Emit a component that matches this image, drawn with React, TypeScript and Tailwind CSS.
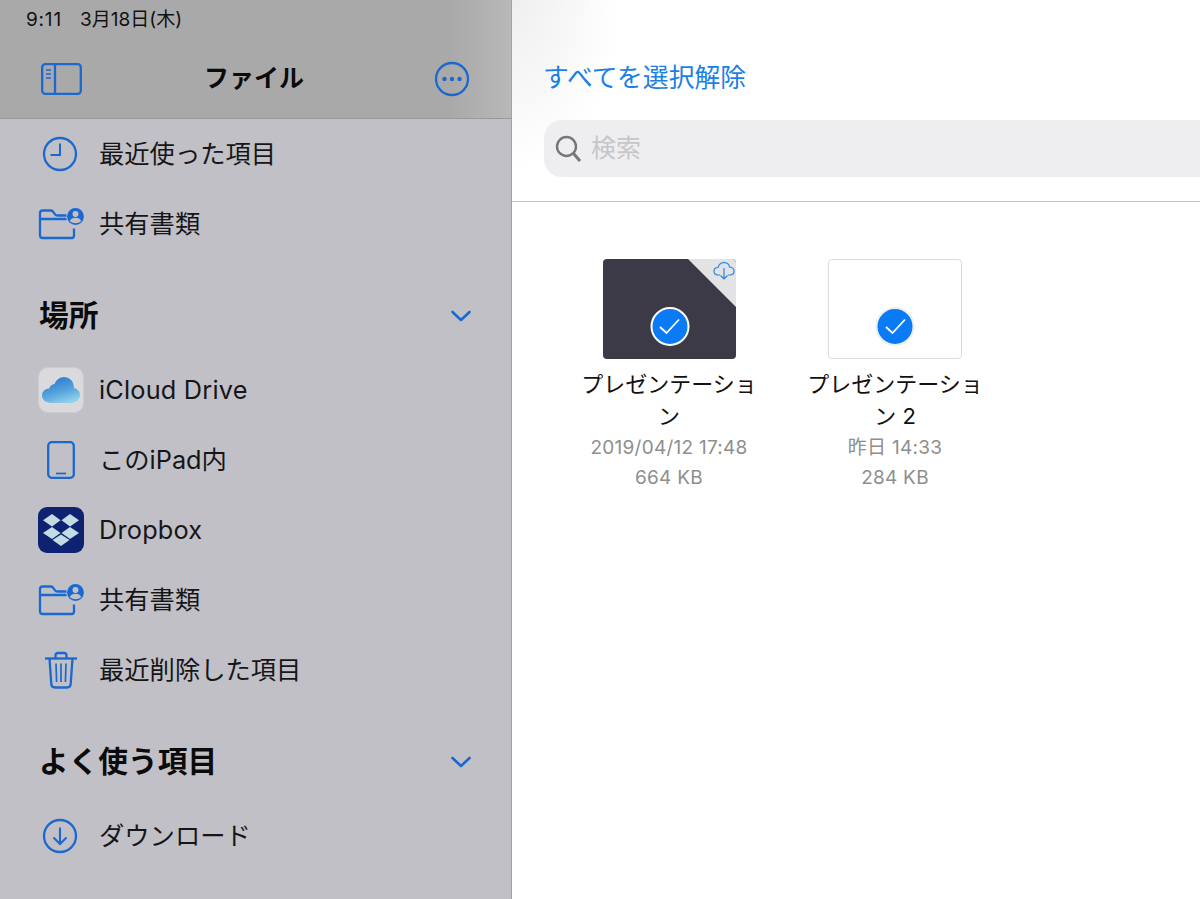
import React from "react";

const blue = "#1b68cf";

function Clock() {
  return (
    <svg className="mr-[2px]" width="36" height="36" viewBox="0 0 36 36" fill="none" stroke={blue} strokeWidth="2.3">
      <circle cx="18" cy="18" r="16" />
      <path d="M18 7.5V19H8.5" strokeWidth="2" />
    </svg>
  );
}

function SharedFolder() {
  return (
    <svg width="46" height="32" viewBox="0 0 46 32" fill="none">
      <path
        d="M36 20.5V27.5Q36 30 33.5 30H4.5Q2 30 2 27.5V5Q2 2.5 4.5 2.5H12.5Q14 2.5 15 3.6L17 6.4Q17.8 7.5 19.5 7.5H28.5M2 11H28.5"
        stroke={blue}
        strokeWidth="2.3"
      />
      <circle cx="37.5" cy="8.5" r="8.4" fill={blue} />
      <circle cx="37.5" cy="6" r="3" fill="#c1c0c6" />
      <path d="M31.8 13.2Q33 9.8 37.5 9.8T43.2 13.2Q41 15.3 37.5 15.3T31.8 13.2Z" fill="#c1c0c6" />
    </svg>
  );
}

function Tablet() {
  return (
    <svg className="mr-[1px]" width="28" height="38" viewBox="0 0 28 38" fill="none" stroke={blue}>
      <rect x="1.2" y="1.2" width="25.6" height="35.6" rx="3.5" strokeWidth="2.3" />
      <path d="M9 32.5H19" strokeWidth="1.8" />
    </svg>
  );
}

function Trash() {
  return (
    <svg className="mr-[1px]" width="34" height="38" viewBox="0 0 34 38" fill="none" stroke={blue} strokeWidth="2.3">
      <path d="M1 7.5H33" />
      <path d="M11.5 7.5V4.5Q11.5 2 14 2H20Q22.5 2 22.5 4.5V7.5" />
      <path d="M5.5 7.5L7.3 33Q7.5 36.5 11 36.5H23Q26.5 36.5 26.7 33L28.5 7.5" />
      <path d="M12 12.5L12.6 31M17 12.5V31M22 12.5L21.4 31" strokeWidth="1.7" />
    </svg>
  );
}

function DownloadCircle() {
  return (
    <svg className="mr-[2px]" width="36" height="36" viewBox="0 0 36 36" fill="none" stroke={blue} strokeWidth="2.3">
      <circle cx="18" cy="18" r="16" />
      <path d="M18 9.5V26M11.5 19.5L18 26L24.5 19.5" strokeWidth="2.1" />
    </svg>
  );
}

function ICloud() {
  return (
    <div className="w-[46px] h-[46px] rounded-[10px] bg-[#dadadc] flex items-center justify-center border border-[#cdcdd0]">
      <svg width="38" height="26" viewBox="0 0 38 26">
        <defs>
          <linearGradient id="ic" gradientUnits="userSpaceOnUse" x1="14" y1="0" x2="22" y2="26">
            <stop offset="0" stopColor="#2a7bcf" />
            <stop offset="0.6" stopColor="#5aa6de" />
            <stop offset="1" stopColor="#8ed0ea" />
          </linearGradient>
        </defs>
        <g fill="url(#ic)">
          <circle cx="7" cy="18.5" r="7" />
          <circle cx="13" cy="13" r="6" />
          <circle cx="22" cy="10" r="10" />
          <circle cx="31" cy="18" r="7" />
          <rect x="7" y="15" width="24" height="11" />
        </g>
      </svg>
    </div>
  );
}

function DropboxIcon() {
  return (
    <div className="w-[46px] h-[46px] rounded-[9px] bg-[#0e2272] flex items-center justify-center">
      <svg width="36" height="32" viewBox="0 0 36 32" fill="#c3dbe2">
        <path d="M9 0L17.5 6.3L9 12.6L0 6.3Z" />
        <path d="M27 0L36 6.3L27 12.6L18.5 6.3Z" />
        <path d="M9 13L17.5 19L9 25L0 19Z" />
        <path d="M27 13L36 19L27 25L18.5 19Z" />
        <path d="M18 20.5L26.5 26L18 32L9.5 26Z" />
      </svg>
    </div>
  );
}

function Chevron() {
  return (
    <svg width="22" height="14" viewBox="0 0 22 14" fill="none" stroke={blue} strokeWidth="2.6" strokeLinecap="round" strokeLinejoin="round">
      <path d="M2.5 3L11 11L19.5 3" />
    </svg>
  );
}

function Row({ icon, label, latin }: { icon: React.ReactNode; label: string; latin?: boolean }) {
  return (
    <div className="h-[70px] flex items-center">
      <div className="w-[46px] ml-[38px] mr-[15px] flex justify-center shrink-0">{icon}</div>
      <span className={`pb-[1px] text-[25.3px] leading-[36px] text-[#161618] ${latin ? "tracking-[0.2px]" : ""}`}>{label}</span>
    </div>
  );
}

function Section({ title }: { title: string }) {
  return (
    <div className="h-[96px] pt-[18px] pl-[39px] pr-[39px] flex items-center justify-between">
      <span className="pb-[3px] text-[29.7px] leading-[40px] font-bold text-[#0b0b0c]">{title}</span>
      <Chevron />
    </div>
  );
}

function FileItem({ dark, name, date, size }: { dark?: boolean; name: string; date: string; size: string }) {
  return (
    <div className="w-[190px] flex flex-col items-center">
      <div
        className={`relative h-[100px] rounded-[4px] overflow-hidden ${
          dark ? "w-[133px] ml-[1px] bg-[#3b3a46]" : "w-[134px] bg-white border border-[#dcdcdc]"
        }`}
      >
        {dark && (
          <>
            <div className="absolute right-0 top-0 w-[48px] h-[48px] bg-[#e3e3e3] [clip-path:polygon(0_0,100%_0,100%_100%)]" />
            <svg className="absolute right-[1px] top-[2px]" width="22" height="20" viewBox="0 0 22 20" fill="none" stroke="#2a84e8" strokeWidth="1.2">
              <path d="M7 14H5Q1 14 1 10Q1 6.5 5 6.5Q6.5 1.5 11.5 1.5Q16 2 16.5 6Q21 6.5 21 10Q21 14 17 14H15" />
              <path d="M11 7V18M7.5 14.5L11 18L14.5 14.5" />
            </svg>
          </>
        )}
        <div
          className={`absolute left-1/2 -translate-x-1/2 w-[39px] h-[39px] rounded-full bg-[#0a7bf5] flex items-center justify-center border-2 ${
            dark ? "top-[48px] border-white" : "top-[47px] border-[#eeeeee]"
          }`}
        >
          <svg width="22" height="17" viewBox="0 0 22 17" fill="none" stroke="white" strokeWidth="1.8">
            <path d="M1.5 9L8 15L20.5 1.5" />
          </svg>
        </div>
      </div>
      <div className="mt-[9px] text-[22px] leading-[32px] text-[#111] text-center w-[190px]">{name}</div>
      <div className="text-[19px] leading-[31px] tracking-[0.25px] text-[#8e8e8e] text-center whitespace-nowrap">{date}</div>
      <div className="text-[19px] leading-[30px] tracking-[0.25px] text-[#8e8e8e] text-center">{size}</div>
    </div>
  );
}

export default function App() {
  return (
    <div
      className="w-[1200px] h-[899px] flex overflow-hidden bg-white"
      style={{ fontFamily: '"Inter", "Noto Sans CJK JP", sans-serif' }}
    >
      <aside className="w-[512px] shrink-0 h-full bg-[#c1c0c6] border-r border-[#a3a3a6] flex flex-col">
        <header className="h-[119px] shrink-0 border-b border-[#98989a] bg-[linear-gradient(90deg,#a9a9aa_0%,#a9a9aa_88%,#b8b8b9_100%)] flex flex-col">
          <div className="h-[40px] pl-[26px] pt-[9px] flex text-[19px] leading-[22px] text-[#111]">
            <span className="w-[54px] tracking-[0.8px]">9:11</span>
            <span>3月18日(木)</span>
          </div>
          <div className="h-[78px] relative flex items-center justify-between pl-[41px] pr-[41px]">
            <svg width="41" height="32" viewBox="0 0 41 32" fill="none" stroke={blue} strokeWidth="2.3">
              <rect x="1.2" y="1.2" width="38.6" height="29.6" rx="3" />
              <path d="M14 1V31" />
              <path d="M5 7H10M5 11H10M5 15H10" strokeWidth="1.5" />
            </svg>
            <span className="absolute left-[204px] top-[19px] text-[25px] leading-[38px] font-bold text-[#0b0b0c]">ファイル</span>
            <svg width="36" height="36" viewBox="0 0 36 36" fill="none" stroke={blue} strokeWidth="2.3">
              <circle cx="18" cy="18" r="16" />
              <circle cx="10.5" cy="18" r="2.2" fill={blue} stroke="none" />
              <circle cx="18" cy="18" r="2.2" fill={blue} stroke="none" />
              <circle cx="25.5" cy="18" r="2.2" fill={blue} stroke="none" />
            </svg>
          </div>
        </header>
        <Row icon={<Clock />} label="最近使った項目" />
        <Row icon={<SharedFolder />} label="共有書類" />
        <Section title="場所" />
        <Row icon={<ICloud />} label="iCloud Drive" latin />
        <Row icon={<Tablet />} label="このiPad内" />
        <Row icon={<DropboxIcon />} label="Dropbox" latin />
        <Row icon={<SharedFolder />} label="共有書類" />
        <Row icon={<Trash />} label="最近削除した項目" />
        <Section title="よく使う項目" />
        <Row icon={<DownloadCircle />} label="ダウンロード" />
      </aside>
      <main className="flex-1 min-w-0 flex flex-col">
        <div className="h-[202px] shrink-0 border-b border-[#c4c4c6] bg-[radial-gradient(ellipse_110px_170px_at_0_0,#efeff0,#ffffff)] pl-[32px]">
          <div className="h-[120px] pt-[59px] text-[25.8px] leading-[38px] text-[#1b7fe3] -ml-[1px]">すべてを選択解除</div>
          <div className="h-[57px] rounded-l-[18px] bg-[#eeeef0] flex items-center pl-[11px]">
            <svg width="26" height="28" viewBox="0 0 26 28" fill="none" stroke="#77777b" strokeWidth="2.4">
              <circle cx="11.5" cy="11.5" r="9.5" />
              <path d="M18.5 18.5L25 26" strokeWidth="3" />
            </svg>
            <span className="ml-[10px] text-[25px] text-[#c6c6c9]">検索</span>
          </div>
        </div>
        <div className="flex gap-[36px] pl-[62px] pt-[57px]">
          <FileItem dark name="プレゼンテーション" date="2019/04/12 17:48" size="664 KB" />
          <FileItem name="プレゼンテーション 2" date="昨日 14:33" size="284 KB" />
        </div>
      </main>
    </div>
  );
}
